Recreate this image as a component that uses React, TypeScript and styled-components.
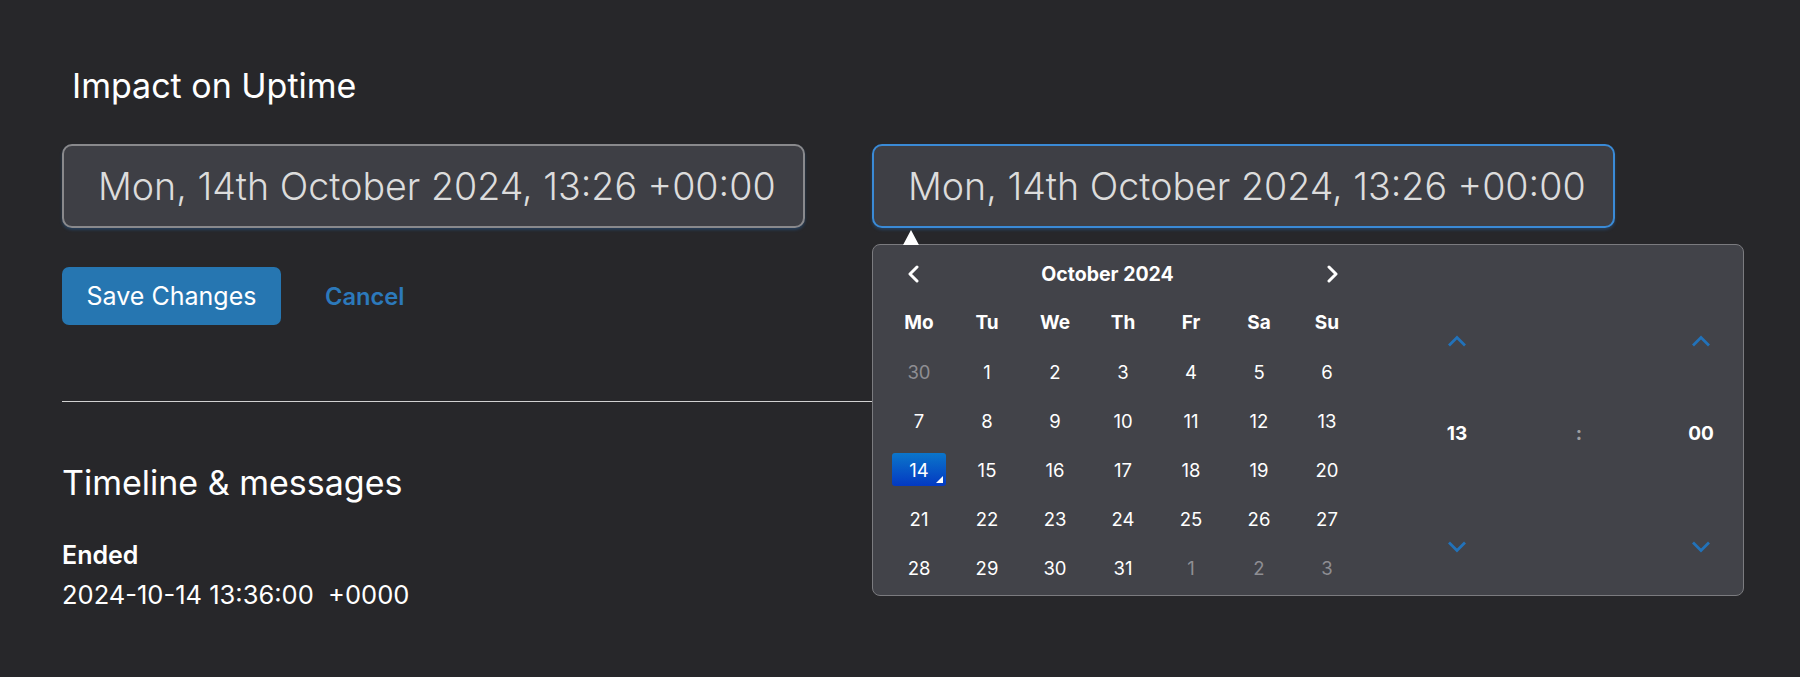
import styled, { createGlobalStyle } from 'styled-components';

const GlobalStyle = createGlobalStyle`
  body {
    margin: 0;
    background-color: #27272a;
    color: #fff;
    font-family: Inter, "Noto Sans", sans-serif;
  }
`;

const StyledPage = styled.div`
  width: 1800px;
  height: 677px;
  box-sizing: border-box;
  padding: 66px 60px 0 62px;
  overflow: hidden;
`;

const StyledTitle = styled.h2`
  margin: 0 0 38px 10px;
  font-size: 34px;
  line-height: 40px;
  font-weight: 400;
`;

const StyledInputsRow = styled.div`
  display: flex;
  align-items: flex-start;
  column-gap: 67px;
`;

const StyledField = styled.div`
  position: relative;
`;

const StyledDateInput = styled.div<{ $focused?: boolean }>`
  width: 743px;
  height: 84px;
  box-sizing: border-box;
  display: flex;
  align-items: center;
  padding-left: 34px;
  border: 2px solid ${({ $focused }) => ($focused ? '#3a8ad6' : '#89898c')};
  border-radius: 10px;
  background-color: #3e3f45;
  box-shadow: 0 2px 3px rgba(40, 110, 180, 0.35);
  font-size: 37.6px;
  font-weight: 300;
  color: #dcdcdc;
  white-space: nowrap;
`;

const StyledPopup = styled.div`
  position: absolute;
  top: calc(100% + 16px);
  left: 0;
  z-index: 2;
  width: 872px;
  height: 352px;
  box-sizing: border-box;
  display: flex;
  border: 1px solid #7b7b7f;
  border-radius: 8px;
  background-color: #424349;
`;

const StyledPointer = styled.div`
  position: absolute;
  top: -15px;
  left: 30px;
  width: 0;
  height: 0;
  border-left: 8px solid transparent;
  border-right: 8px solid transparent;
  border-bottom: 15px solid #fff;
`;

const StyledCalendar = styled.div`
  width: 476px;
  margin-left: 12px;
  padding-top: 11px;
`;

const StyledCalendarHeader = styled.div`
  display: flex;
  align-items: center;
  height: 36px;
`;

const StyledNavButton = styled.button`
  width: 56px;
  height: 36px;
  display: flex;
  align-items: center;
  justify-content: center;
  padding: 0;
  border: none;
  background: none;
  color: #fff;
`;

const StyledMonth = styled.div`
  flex: 1;
  padding-right: 31px;
  text-align: center;
  font-size: 19.5px;
  font-weight: 700;
`;

const StyledDaysGrid = styled.div`
  display: grid;
  grid-template-columns: repeat(7, 68px);
  grid-auto-rows: 49px;
  margin-top: 6px;
`;

const StyledWeekday = styled.div`
  display: flex;
  align-items: center;
  justify-content: center;
  font-size: 19px;
  font-weight: 700;
`;

const StyledDay = styled.div<{ $muted?: boolean }>`
  display: flex;
  align-items: center;
  justify-content: center;
  font-size: 18.5px;
  color: ${({ $muted }) => ($muted ? '#8e8e93' : '#fff')};
`;

const StyledSelected = styled.span`
  position: relative;
  width: 54px;
  height: 33px;
  display: flex;
  align-items: center;
  justify-content: center;
  border-radius: 3px;
  background: linear-gradient(#0b76ca, #0339c2);

  &::after {
    content: '';
    position: absolute;
    right: 3px;
    bottom: 3px;
    width: 0;
    height: 0;
    border-left: 7px solid transparent;
    border-bottom: 7px solid #fff;
  }
`;

const StyledTime = styled.div`
  display: flex;
  align-items: flex-start;
  column-gap: 60px;
  padding: 86px 0 0 66px;
`;

const StyledTimeColumn = styled.div<{ $wide?: boolean }>`
  width: ${({ $wide }) => ($wide ? '64px' : '60px')};
  display: flex;
  flex-direction: column;
  align-items: center;
`;

const StyledSpin = styled.button`
  height: 20px;
  display: flex;
  align-items: center;
  justify-content: center;
  padding: 0;
  border: none;
  background: none;
  color: #2272b9;
`;

const StyledTimeValue = styled.div<{ $sep?: boolean }>`
  height: 24px;
  margin: ${({ $sep }) => ($sep ? '90px 0 0' : '70px 0 92px')};
  display: flex;
  align-items: center;
  font-size: 19px;
  font-weight: 700;
  color: ${({ $sep }) => ($sep ? '#9d9da2' : '#fff')};
`;

const StyledActions = styled.div`
  display: flex;
  align-items: center;
  column-gap: 44px;
  margin-top: 39px;
`;

const StyledSaveButton = styled.button`
  width: 219px;
  height: 58px;
  padding: 0;
  border: none;
  border-radius: 7px;
  background-color: #2676b1;
  color: #fff;
  font-family: inherit;
  font-size: 25px;
`;

const StyledCancel = styled.button`
  padding: 0;
  border: none;
  background: none;
  color: #2c79bb;
  font-family: inherit;
  font-size: 23.7px;
  font-weight: 600;
`;

const StyledDivider = styled.hr`
  margin: 76px 0 0;
  border: none;
  height: 1px;
  background-color: #d2d2d2;
`;

const StyledSectionTitle = styled.h2`
  margin: 61px 0 0;
  font-size: 34px;
  line-height: 40px;
  font-weight: 400;
`;

const StyledEventLabel = styled.div`
  margin-top: 37px;
  font-size: 25px;
  line-height: 30px;
  font-weight: 600;
`;

const StyledEventTime = styled.div`
  margin-top: 10px;
  font-size: 25.5px;
  line-height: 30px;
  white-space: pre;
`;

const Chevron = ({ dir }: { dir: 'left' | 'right' | 'up' | 'down' }) => {
  if (dir === 'left' || dir === 'right') {
    return (
      <svg width="14" height="18" viewBox="0 0 14 18" fill="none">
        <path
          d={dir === 'left' ? 'M11 2 L4 9 L11 16' : 'M3 2 L10 9 L3 16'}
          stroke="currentColor"
          strokeWidth="3"
          strokeLinecap="round"
          strokeLinejoin="round"
        />
      </svg>
    );
  }
  return (
    <svg width="20" height="12" viewBox="0 0 20 12" fill="none">
      <path
        d={dir === 'up' ? 'M2 10.5 L10 2.5 L18 10.5' : 'M2 1.5 L10 9.5 L18 1.5'}
        stroke="currentColor"
        strokeWidth="2.8"
      />
    </svg>
  );
};

const weekdays = ['Mo', 'Tu', 'We', 'Th', 'Fr', 'Sa', 'Su'];

const days = [
  { d: 30, muted: true },
  ...Array.from({ length: 31 }, (_, i) => ({ d: i + 1, muted: false })),
  { d: 1, muted: true },
  { d: 2, muted: true },
  { d: 3, muted: true },
];

const dateLabel = 'Mon, 14th October 2024, 13:26 +00:00';

function App() {
  return (
    <>
      <GlobalStyle />
      <StyledPage>
        <StyledTitle>Impact on Uptime</StyledTitle>
        <StyledInputsRow>
          <StyledField>
            <StyledDateInput>{dateLabel}</StyledDateInput>
          </StyledField>
          <StyledField>
            <StyledDateInput $focused>{dateLabel}</StyledDateInput>
            <StyledPopup>
              <StyledPointer />
              <StyledCalendar>
                <StyledCalendarHeader>
                  <StyledNavButton>
                    <Chevron dir="left" />
                  </StyledNavButton>
                  <StyledMonth>October 2024</StyledMonth>
                  <StyledNavButton>
                    <Chevron dir="right" />
                  </StyledNavButton>
                </StyledCalendarHeader>
                <StyledDaysGrid>
                  {weekdays.map((w) => (
                    <StyledWeekday key={w}>{w}</StyledWeekday>
                  ))}
                  {days.map((day, i) => (
                    <StyledDay key={i} $muted={day.muted}>
                      {!day.muted && day.d === 14 ? (
                        <StyledSelected>{day.d}</StyledSelected>
                      ) : (
                        day.d
                      )}
                    </StyledDay>
                  ))}
                </StyledDaysGrid>
              </StyledCalendar>
              <StyledTime>
                <StyledTimeColumn>
                  <StyledSpin>
                    <Chevron dir="up" />
                  </StyledSpin>
                  <StyledTimeValue>13</StyledTimeValue>
                  <StyledSpin>
                    <Chevron dir="down" />
                  </StyledSpin>
                </StyledTimeColumn>
                <StyledTimeColumn $wide>
                  <StyledTimeValue $sep>:</StyledTimeValue>
                </StyledTimeColumn>
                <StyledTimeColumn>
                  <StyledSpin>
                    <Chevron dir="up" />
                  </StyledSpin>
                  <StyledTimeValue>00</StyledTimeValue>
                  <StyledSpin>
                    <Chevron dir="down" />
                  </StyledSpin>
                </StyledTimeColumn>
              </StyledTime>
            </StyledPopup>
          </StyledField>
        </StyledInputsRow>
        <StyledActions>
          <StyledSaveButton>Save Changes</StyledSaveButton>
          <StyledCancel>Cancel</StyledCancel>
        </StyledActions>
        <StyledDivider />
        <StyledSectionTitle>Timeline &amp; messages</StyledSectionTitle>
        <StyledEventLabel>Ended</StyledEventLabel>
        <StyledEventTime>2024-10-14 13:36:00  +0000</StyledEventTime>
      </StyledPage>
    </>
  );
}

export default App;
